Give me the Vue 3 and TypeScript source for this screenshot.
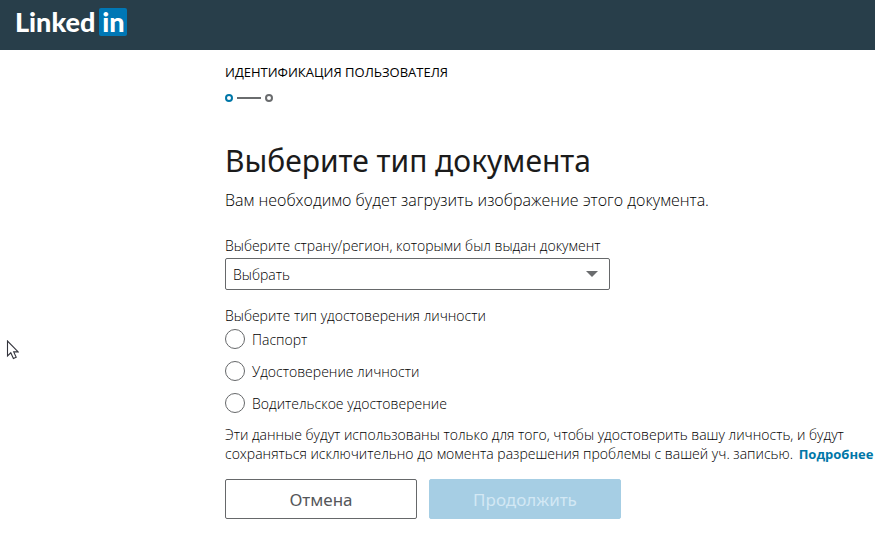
<script setup lang="ts">
import { ref } from 'vue'

interface DocumentType {
  value: string
  label: string
}

const documentTypes: DocumentType[] = [
  { value: 'passport', label: 'Паспорт' },
  { value: 'id-card', label: 'Удостоверение личности' },
  { value: 'driver-licence', label: 'Водительское удостоверение' },
]

const country = ref('')
const documentType = ref('')
</script>

<template>
  <div class="page">
    <header class="topbar">
      <a class="logo" href="#"><span class="logo-word">Linked</span><span class="logo-box">in</span></a>
    </header>

    <main class="content">
      <p class="eyebrow">ИДЕНТИФИКАЦИЯ ПОЛЬЗОВАТЕЛЯ</p>
      <div class="steps">
        <span class="dot dot-current"></span>
        <span class="line"></span>
        <span class="dot"></span>
      </div>

      <h1>Выберите тип документа</h1>
      <p class="lead">Вам необходимо будет загрузить изображение этого документа.</p>

      <form @submit.prevent>
        <label class="caption" for="country">Выберите страну/регион, которыми был выдан документ</label>
        <div class="select-wrap">
          <select id="country" v-model="country">
            <option value="">Выбрать</option>
          </select>
          <svg class="caret" viewBox="0 0 12 6" width="12" height="6"><path d="M0 0h12L6 6z" fill="#6a6c6e" /></svg>
        </div>

        <fieldset>
          <legend class="caption">Выберите тип удостоверения личности</legend>
          <label v-for="item in documentTypes" :key="item.value" class="option">
            <input v-model="documentType" type="radio" name="document-type" :value="item.value" />
            <span>{{ item.label }}</span>
          </label>
        </fieldset>

        <p class="note">
          Эти данные будут использованы только для того, чтобы удостоверить вашу личность, и будут<br />
          сохраняться исключительно до момента разрешения проблемы с вашей уч. записью.
          <a href="#">Подробнее</a>
        </p>

        <div class="actions">
          <button class="button secondary" type="button">Отмена</button>
          <button class="button primary" type="submit" disabled>Продолжить</button>
        </div>
      </form>
    </main>

    <svg class="pointer" viewBox="0 0 13 20" width="13" height="20">
      <path d="M1.5 1v15l3.300-3.200 2.600 5.700 2.800-1.200-2.500-5.400h4.500z" fill="#fff" stroke="#33343c" stroke-width="1.100" />
    </svg>
  </div>
</template>

<style>
body {
  margin: 0;
  background: #fff;
}
</style>

<style scoped>
.page {
  position: relative;
  overflow-x: clip;
  color: #000;
  font-family: "Open Sans", "Noto Sans", sans-serif;
  font-size: 14px;
  font-weight: 300;
}
.topbar {
  display: flex;
  align-items: center;
  height: 50px;
  box-sizing: border-box;
  padding: 0 15px 6px;
  background: #283e4a;
}
.logo {
  display: flex;
  align-items: center;
  gap: 4px;
  color: #fff;
  font-family: Lato, sans-serif;
  font-size: 27px;
  font-weight: 900;
  line-height: 28px;
  text-decoration: none;
}
.logo-box {
  width: 28px;
  border-radius: 2px;
  background: #0077b5;
  text-align: center;
}
.content {
  margin-left: 225px;
  padding-top: 12px;
}
p,
h1 {
  margin: 0;
}
.eyebrow {
  font-size: 13px;
  font-weight: 400;
  line-height: 20px;
}
.steps {
  display: flex;
  align-items: center;
  gap: 4px;
  height: 8px;
  margin-top: 12px;
}
.dot {
  width: 8px;
  height: 8px;
  box-sizing: border-box;
  border: 2px solid #6a6c6e;
  border-radius: 50%;
}
.dot-current {
  border-color: #0077a8;
}
.line {
  width: 24px;
  height: 2px;
  background: #6a6c6e;
}
h1 {
  margin-top: 39px;
  color: #1b1b1b;
  font-family: "Noto Sans", sans-serif;
  font-size: 30px;
  font-weight: 400;
  line-height: 40px;
}
.lead {
  margin-top: 7px;
  font-size: 16px;
  line-height: 24px;
}
.caption {
  display: block;
  padding: 0;
  line-height: 20px;
}
form {
  margin-top: 24px;
}
.select-wrap {
  position: relative;
  width: 385px;
  margin-top: 2px;
}
select {
  appearance: none;
  display: block;
  width: 100%;
  height: 32px;
  padding: 0 32px 0 7px;
  border: 1px solid #66686a;
  border-radius: 2px;
  background: #fff;
  color: inherit;
  font: inherit;
}
.caret {
  position: absolute;
  top: 13px;
  right: 12px;
  pointer-events: none;
}
fieldset {
  margin: 16px 0 0;
  padding: 0;
  border: 0;
}
.option {
  display: flex;
  align-items: center;
  gap: 7px;
  width: max-content;
  height: 20px;
  margin-bottom: 12px;
}
.option input {
  appearance: none;
  width: 20px;
  height: 20px;
  box-sizing: border-box;
  margin: 0;
  border: 1px solid #66686a;
  border-radius: 50%;
}
.option input:checked {
  border: 6px solid #0077b5;
}
.caption + .option {
  margin-top: 3px;
}
.note {
  line-height: 19px;
  white-space: nowrap;
}
.note a {
  margin-left: 2px;
  color: #0077a8;
  font-size: 13px;
  font-weight: 700;
  text-decoration: none;
}
.actions {
  display: flex;
  gap: 12px;
  margin-top: 15px;
}
.button {
  width: 192px;
  height: 40px;
  padding: 0;
  border: 1px solid #66686a;
  border-radius: 2px;
  background: #fff;
  color: #55575a;
  font-family: "Noto Sans", sans-serif;
  font-size: 17px;
}
.primary {
  border-color: #a6cee4;
  background: #a6cee4;
  color: #d3e8f4;
}
.pointer {
  position: absolute;
  top: 340px;
  left: 6px;
  pointer-events: none;
}
</style>
